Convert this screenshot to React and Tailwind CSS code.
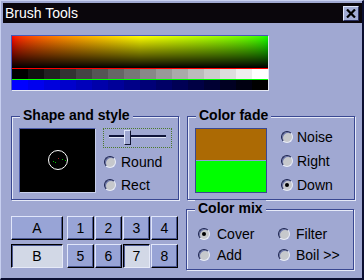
const BG = "bg-[#a0a8d2]";

function Radio({ checked }) {
  return (
    <div className="relative w-[12px] h-[12px] rounded-full bg-[#c6c8cc] border border-t-[#1a2250] border-l-[#1a2250] border-r-[#e8ecf8] border-b-[#e8ecf8] shadow-[inset_1px_1px_0_#6a74a8] shrink-0 flex items-center justify-center">
      {checked && <div className="w-[4px] h-[4px] rounded-full bg-black" />}
    </div>
  );
}

function RadioRow({ label, checked, gap = "ml-[5px]" }) {
  return (
    <div className="flex items-center h-[12px]">
      <Radio checked={checked} />
      <span className={`${gap} text-[14px] leading-[16px] text-black whitespace-nowrap`}>{label}</span>
    </div>
  );
}

function Group({ label, className, children }) {
  return (
    <div className={`relative border border-[#3a4892] shadow-[inset_1px_1px_0_#e6eaf8,1px_1px_0_#e6eaf8] ${className}`}>
      <div className={`absolute -top-[10px] left-[8px] px-[3px] ${BG} text-[14px] font-bold leading-[16px] text-black whitespace-nowrap`}>
        {label}
      </div>
      {children}
    </div>
  );
}

function Btn({ label, pressed, w = "w-[27px]" }) {
  return pressed ? (
    <div className={`${w} h-[24px] flex items-center justify-center bg-[#d2d8e6] border border-t-black border-l-black border-r-[#e6eaf8] border-b-[#e6eaf8] shadow-[inset_1px_1px_0_#4a5690] text-[14px] leading-[16px] text-black`}>
      {label}
    </div>
  ) : (
    <div className={`${w} h-[24px] flex items-center justify-center bg-[#98a4d6] border border-t-[#e0e6fa] border-l-[#e0e6fa] border-r-black border-b-black shadow-[inset_-1px_-1px_0_#4a5690] text-[14px] leading-[16px] text-black`}>
      {label}
    </div>
  );
}

export default function App() {
  const steps = Array.from({ length: 16 }, (_, i) => i);
  return (
    <div
      className={`w-[364px] h-[280px] ${BG} border-l border-t border-l-[#c8d0f0] border-t-[#c8d0f0] border-r-2 border-b-2 border-r-[#0a0e30] border-b-[#0a0e30] flex flex-col overflow-hidden`}
      style={{ fontFamily: '"Liberation Sans", Arial, sans-serif' }}
    >
      {/* Title bar */}
      <div className="mt-[2px] ml-[2px] h-[20px] bg-[#0a060c] flex items-center justify-between pl-[2px] pr-[3px]">
        <span className="text-white text-[14px] leading-[16px]">Brush Tools</span>
        <div className="w-[16px] h-[15px] bg-[#a2acd4] border border-t-[#e0e6fa] border-l-[#e0e6fa] border-r-[#2a3060] border-b-[#2a3060] flex items-center justify-center">
          <svg width="10" height="9" viewBox="0 0 10 9">
            <path d="M1 0.5 L9 8.5 M9 0.5 L1 8.5" stroke="#000" strokeWidth="2.2" />
          </svg>
        </div>
      </div>

      {/* Gradient palette */}
      <div className="mt-[12px] ml-[10px] w-[258px] h-[56px] border border-t-[#4858b8] border-l-[#4858b8] border-r-[#e4e8f4] border-b-[#e4e8f4] flex flex-col">
        <div className="h-[32px] bg-linear-to-r from-[#ff0000] via-[#ffff00] to-[#00ff00]">
          <div className="h-full bg-linear-to-b from-transparent to-black" />
        </div>
        <div className="h-[1px] bg-[#ff0000]" />
        <div className="h-[10px] flex">
          {steps.map((i) => {
            const v = Math.round((i / 15) * 255);
            return <div key={i} className="flex-1" style={{ backgroundColor: `rgb(${v},${v},${v})` }} />;
          })}
        </div>
        <div className="h-[1px] bg-[#00ff00]" />
        <div className="flex-1 flex">
          {steps.map((i) => {
            const v = Math.round(((15 - i) / 15) * 255);
            return <div key={i} className="flex-1" style={{ backgroundColor: `rgb(0,0,${v})` }} />;
          })}
        </div>
      </div>

      {/* Middle row */}
      <div className="mt-[25px] ml-[10px] flex gap-[8px]">
        <Group label="Shape and style" className="w-[168px] h-[84px]">
          <div className="flex pl-[7px] pt-[11px]">
            <div className="relative w-[77px] h-[65px] bg-black border border-t-[#4a5aa8] border-l-[#4a5aa8] border-r-[#c8d0ec] border-b-[#c8d0ec]">
              <div className="absolute left-[28px] top-[21px] w-[20px] h-[20px] rounded-full border border-white" />
              <div className="absolute left-[33px] top-[32px] w-[1px] h-[1px] bg-[#00c000]" />
              <div className="absolute left-[35px] top-[33px] w-[1px] h-[1px] bg-[#00c000]" />
              <div className="absolute left-[42px] top-[30px] w-[1px] h-[1px] bg-[#00c000]" />
              <div className="absolute left-[45px] top-[31px] w-[1px] h-[1px] bg-[#00c000]" />
              <div className="absolute left-[38px] top-[29px] w-[1px] h-[1px] bg-[#a02020]" />
            </div>
            <div className="ml-[7px] flex flex-col">
              <div className="relative w-[69px] h-[20px] border border-dotted border-[#4c7a2c]">
                <div className="absolute left-[5px] right-[5px] top-[6px] h-[3px] border-t-2 border-t-[#10143a] border-b border-b-[#dfe4f6]" />
                <div className="absolute left-[20px] top-[1px] w-[7px] h-[15px] bg-[#a0a8d2] border border-t-[#e0e6fa] border-l-[#e0e6fa] border-r-[#101430] border-b-[#101430]" />
              </div>
              <div className="mt-[8px] pl-[1px]">
                <RadioRow label="Round" gap="ml-[5px]" />
              </div>
              <div className="mt-[11px] pl-[1px]">
                <RadioRow label="Rect" gap="ml-[5px]" />
              </div>
            </div>
          </div>
        </Group>

        <Group label="Color fade" className="w-[168px] h-[84px]">
          <div className="flex pl-[7px] pt-[11px]">
            <div className="w-[72px] h-[65px] border border-[#3a4892] flex flex-col">
              <div className="h-[31px] bg-[#ac6a04]" />
              <div className="h-[1px] bg-[#8fa0d8]" />
              <div className="flex-1 bg-[#00ff00]" />
            </div>
            <div className="ml-[14px] pt-[3px] flex flex-col gap-[12px]">
              <RadioRow label="Noise" gap="ml-[4px]" />
              <RadioRow label="Right" gap="ml-[4px]" />
              <RadioRow label="Down" checked gap="ml-[4px]" />
            </div>
          </div>
        </Group>
      </div>

      {/* Bottom row */}
      <div className="ml-[10px] flex items-start">
        <div className="mt-[16px] flex flex-col gap-[4px]">
          <div className="flex">
            <Btn label="A" w="w-[52px]" />
            <div className="ml-[4px] flex gap-[1px]">
              <Btn label="1" />
              <Btn label="2" />
              <Btn label="3" />
              <Btn label="4" />
            </div>
          </div>
          <div className="flex">
            <Btn label="B" w="w-[52px]" pressed />
            <div className="ml-[4px] flex gap-[1px]">
              <Btn label="5" />
              <Btn label="6" />
              <Btn label="7" pressed />
              <Btn label="8" />
            </div>
          </div>
        </div>
        <Group label="Color mix" className="ml-[8px] mt-[9px] w-[168px] h-[61px]">
          <div className="flex pl-[11px] pt-[18px]">
            <div className="flex flex-col gap-[9px] w-[80px]">
              <RadioRow label="Cover" checked gap="ml-[7px]" />
              <RadioRow label="Add" gap="ml-[7px]" />
            </div>
            <div className="flex flex-col gap-[9px]">
              <RadioRow label="Filter" gap="ml-[6px]" />
              <RadioRow label="Boil >>" gap="ml-[6px]" />
            </div>
          </div>
        </Group>
      </div>
    </div>
  );
}
